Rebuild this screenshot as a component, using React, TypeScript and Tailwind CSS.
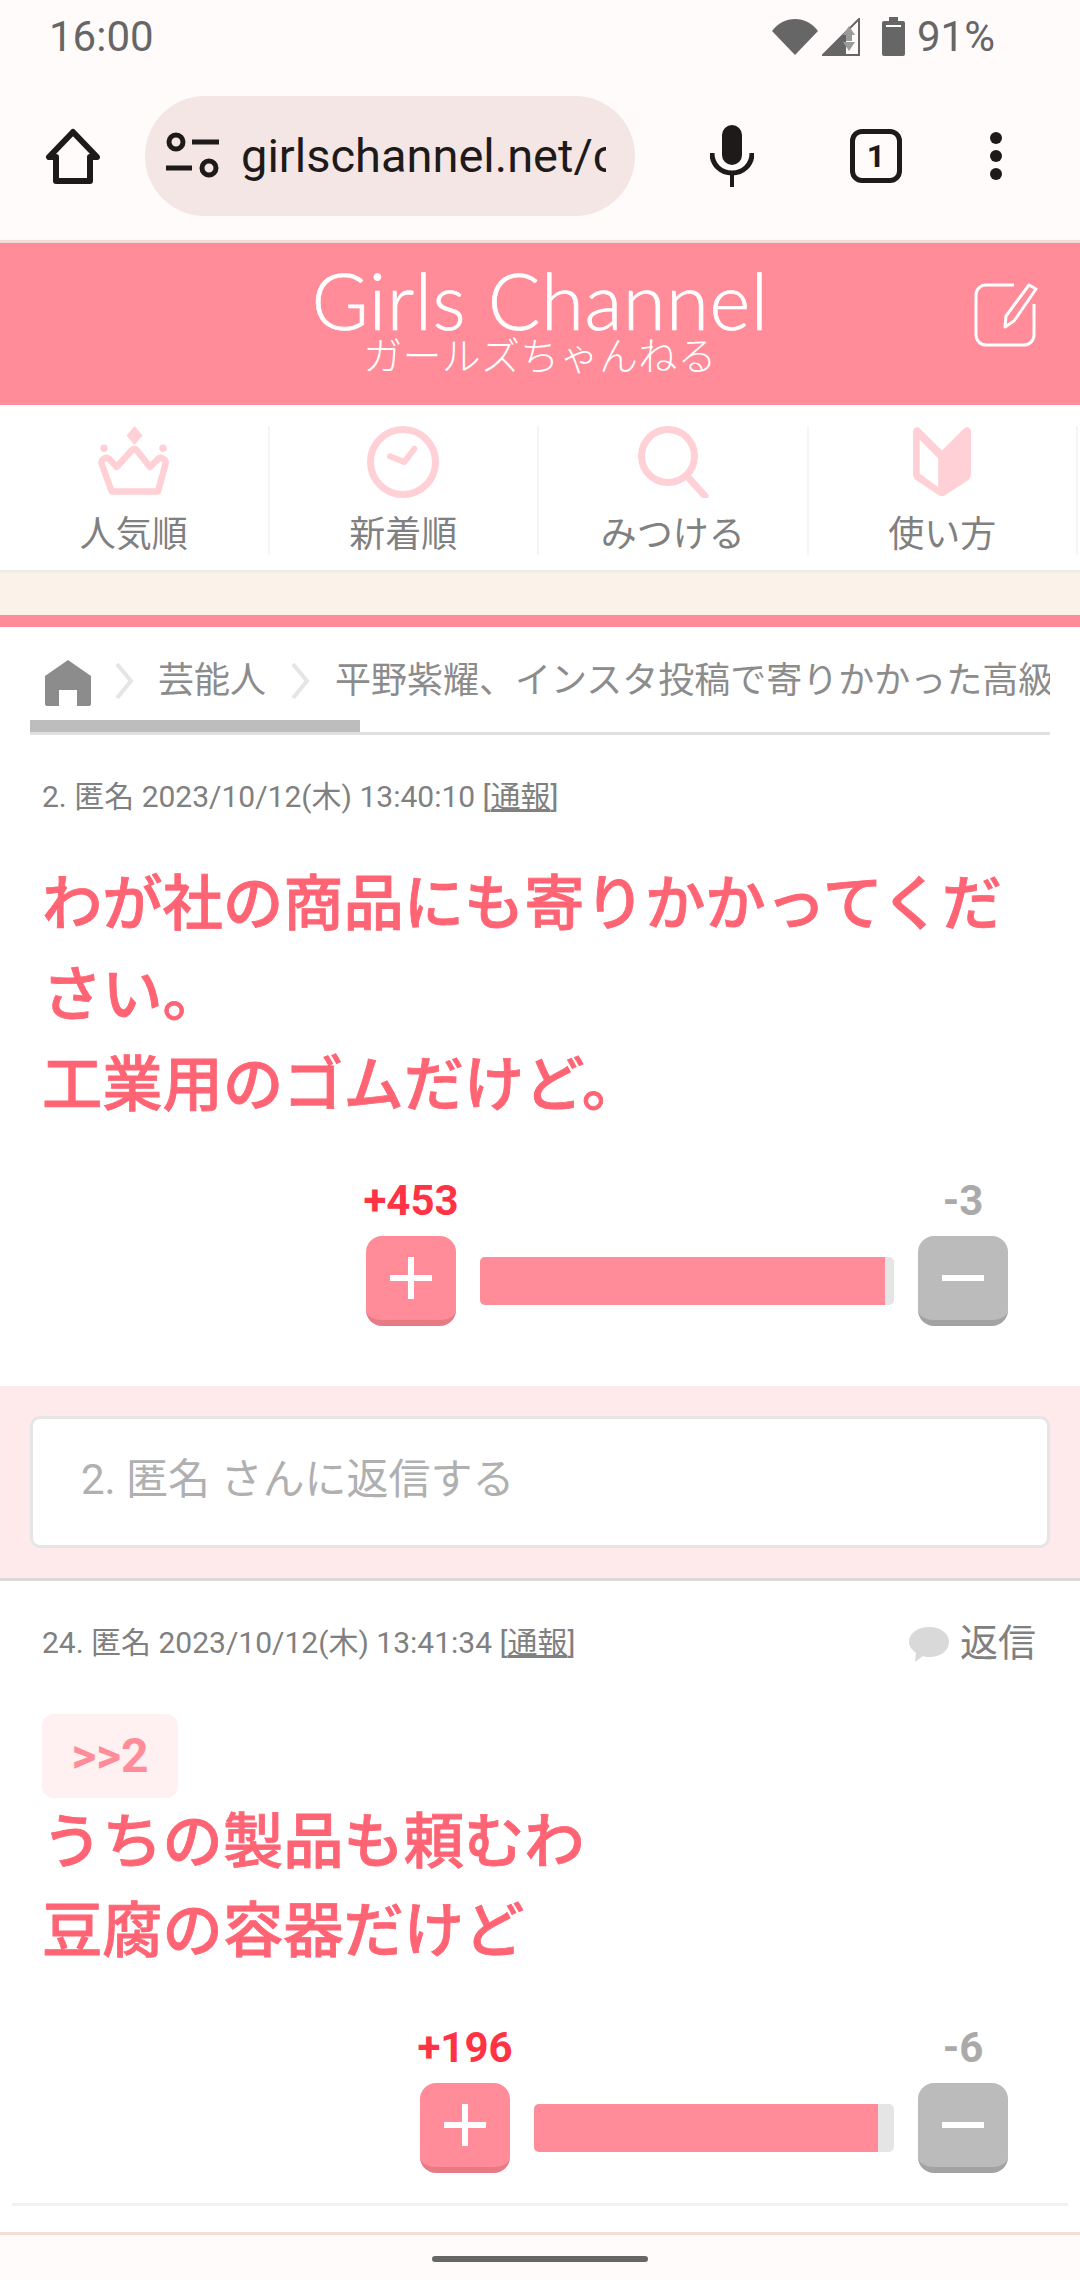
import React from "react";

function StatusBar() {
  return (
    <div className="flex h-[72px] items-center justify-between pl-[49px] pr-[85px] pt-[1px] text-[42px] text-[#666666]">
      <span>16:00</span>
      <div className="flex items-center">
        <svg width="46" height="38" viewBox="0 0 46 38" className="mr-[4px]">
          <path d="M0 13C6 5 14 1 23 1s17 4 23 12L23 37Z" fill="#666666" />
        </svg>
        <svg width="38" height="38" viewBox="0 0 38 38" className="mr-[22px]">
          <path d="M1 37 37 1v36Z" fill="none" stroke="#666666" strokeWidth="2" />
          <path d="M0 38 24 14v24Z" fill="#666666" />
          <path d="M27 8l-6 9h12Z" fill="#9a9a9a" />
          <rect x="24" y="17" width="6" height="6" fill="#9a9a9a" />
          <path d="M21 24h12l-6 9Z" fill="#9a9a9a" />
        </svg>
        <svg width="23" height="39" viewBox="0 0 23 39" className="mr-[12px]">
          <path d="M7 0h9v4h5a2 2 0 0 1 2 2v31a2 2 0 0 1-2 2H2a2 2 0 0 1-2-2V6a2 2 0 0 1 2-2h5Z" fill="#666666" />
          <rect x="4" y="8" width="15" height="2" fill="#fff" />
        </svg>
        <span>91%</span>
      </div>
    </div>
  );
}

function Toolbar() {
  return (
    <div className="flex h-[171px] items-start border-b-[3px] border-[#f3dcd8] pt-[24px]">
      <div className="flex h-[120px] w-[145px] items-center justify-center">
        <svg width="56" height="56" viewBox="0 0 56 56" fill="none" stroke="#1f1a1a" strokeWidth="6" strokeLinejoin="round">
          <path d="M28 4 4 29h7v24h34V29h7Z" />
        </svg>
      </div>
      <div className="flex h-[120px] w-[490px] items-center overflow-hidden rounded-full bg-[#f3e6e5] pl-[21px] pr-[29px]">
        <svg width="54" height="48" viewBox="0 0 54 48" fill="none" stroke="#1f1a1a" strokeWidth="5" className="shrink-0">
          <circle cx="10" cy="10" r="7" />
          <path d="M26 10h27M0 36h26" />
          <circle cx="43" cy="36" r="7" />
        </svg>
        <span className="ml-[21px] overflow-hidden whitespace-nowrap text-[47px] text-[#1f1a1a]">girlschannel.net/comment</span>
      </div>
      <div className="flex h-[120px] w-[194px] items-center justify-center">
        <svg width="44" height="62" viewBox="0 0 44 62" fill="#1f1a1a">
          <rect x="12" y="0" width="20" height="40" rx="10" />
          <path d="M2 28c0 12 9 20 20 20s20-8 20-20" fill="none" stroke="#1f1a1a" strokeWidth="5" />
          <rect x="20" y="46" width="4" height="16" />
        </svg>
      </div>
      <div className="flex h-[120px] w-[94px] items-center justify-center">
        <div className="flex h-[54px] w-[52px] items-center justify-center rounded-[12px] border-[5px] border-[#1f1a1a] text-[32px] font-bold text-[#1f1a1a]">1</div>
      </div>
      <div className="flex h-[120px] w-[146px] flex-col items-center justify-center gap-[6px]">
        <span className="h-[12px] w-[12px] rounded-full bg-[#1f1a1a]" />
        <span className="h-[12px] w-[12px] rounded-full bg-[#1f1a1a]" />
        <span className="h-[12px] w-[12px] rounded-full bg-[#1f1a1a]" />
      </div>
    </div>
  );
}

function SiteHeader() {
  return (
    <div className="relative flex h-[162px] flex-col items-center bg-[#ff8c98] text-white">
      <div className="mt-[22px] h-[70px] font-['Lato'] text-[78px] font-light leading-[70px] tracking-[0.5px] [-webkit-text-stroke:0.7px_#ffffff]">Girls Channel</div>
      <div className="mt-[0px] text-[39px] font-light leading-[44px] tracking-[0.3px]">ガールズちゃんねる</div>
      <svg width="64" height="66" viewBox="0 0 64 66" fill="none" stroke="#fff" strokeWidth="3" className="absolute left-[974px] top-[39px]">
        <path d="M40 3H12A10 10 0 0 0 2 13v40a10 10 0 0 0 10 10h38a10 10 0 0 0 10-10V22" />
        <path d="M55 3l7 4-22 32-9 6 1-11Z" strokeLinejoin="round" />
      </svg>
    </div>
  );
}

const navFill = "#ffd0d6";

function CrownIcon() {
  return (
    <svg width="72" height="72" viewBox="0 0 72 72" fill={navFill}>
      <path d="M36.5 0l8 9.5-8 9.5-8-9.5Z" />
      <circle cx="6" cy="22.3" r="3.7" />
      <circle cx="65" cy="22.3" r="3.7" />
      <path
        d="M13.7 65.5 3.7 38c-1-4 4-8 7.5-5l7.5 8L34 24c1.500-1.500 3-1.500 4.500 0L52 41l8-8c3.500-3 8.500 1 7.500 5l-7.500 27.500Z"
        fill="none"
        stroke={navFill}
        strokeWidth="6.5"
        strokeLinejoin="round"
      />
    </svg>
  );
}

function ClockIcon() {
  return (
    <svg width="72" height="72" viewBox="0 0 72 72" fill="none" stroke={navFill}>
      <circle cx="36" cy="36" r="32.5" strokeWidth="7" />
      <path d="M23 30.300 37.300 36l10-13.300" strokeWidth="6" strokeLinecap="round" strokeLinejoin="round" />
    </svg>
  );
}

function SearchIcon() {
  return (
    <svg width="72" height="72" viewBox="0 0 72 72" fill="none" stroke={navFill}>
      <circle cx="31" cy="30" r="26.5" strokeWidth="7" />
      <path d="M50 50l18 20" strokeWidth="7" strokeLinecap="round" />
    </svg>
  );
}

function BeginnerIcon() {
  return (
    <svg width="58" height="72" viewBox="0 0 60 72" fill={navFill}>
      <path fillRule="evenodd" d="M4 0c2 0 3 1 4 2l22 22L52 2c1-1 2-2 4-2s4 2 4 5v44c0 2-1 3-2 5L34 70c-2 2-6 2-8 0L2 54c-1-2-2-3-2-5V5c0-3 2-5 4-5Zm3 13v35l19 14V32Z" />
    </svg>
  );
}

function NavItem({ label, icon }: { label: string; icon: React.ReactNode }) {
  return (
    <div className="flex w-[269.5px] flex-col items-center pt-[21px]">
      <div className="flex h-[129px] w-full flex-col items-center border-r-[2px] border-[#f5f5f5]">
        <div className="flex h-[72px] items-center">{icon}</div>
        <span className="mt-[15px] text-[36px] leading-[44px] text-[#808080]">{label}</span>
      </div>
    </div>
  );
}

function VoteRow({ plus, minus, barWidth, fillWidth }: { plus: string; minus: string; barWidth: number; fillWidth: number }) {
  return (
    <div className="flex items-end justify-end gap-[24px] pr-[72px]">
      <div className="flex w-[90px] flex-col items-center">
        <span className="mb-[12px] whitespace-nowrap text-[42px] font-bold leading-[46px] text-[#ff3344]">{plus}</span>
        <div className="flex h-[90px] w-[90px] items-center justify-center rounded-[16px] border-b-[6px] border-[#e87a86] bg-[#ff8c98]">
          <svg width="42" height="42" viewBox="0 0 42 42" fill="#fff">
            <rect x="18" y="0" width="6" height="42" />
            <rect x="0" y="18" width="42" height="6" />
          </svg>
        </div>
      </div>
      <div className="mb-[21px] h-[48px] overflow-hidden rounded-[5px] bg-[#e5e5e5]" style={{ width: barWidth }}>
        <div className="h-full bg-[#ff8c98]" style={{ width: fillWidth }} />
      </div>
      <div className="flex w-[90px] flex-col items-center">
        <span className="mb-[12px] text-[42px] font-bold leading-[46px] text-[#aaaaaa]">{minus}</span>
        <div className="flex h-[90px] w-[90px] items-center justify-center rounded-[16px] border-b-[6px] border-[#a3a3a3] bg-[#bbbbbb]">
          <svg width="42" height="6" viewBox="0 0 42 6" fill="#fff">
            <rect width="42" height="6" />
          </svg>
        </div>
      </div>
    </div>
  );
}

function Meta({ text }: { text: string }) {
  return (
    <span className="text-[30px] leading-[40px] text-[#808080]">
      {text} [<span className="underline">通報</span>]
    </span>
  );
}

export default function App() {
  return (
    <div className="flex h-[2280px] w-[1080px] flex-col overflow-hidden bg-[#fffbfa] font-['Roboto','Noto_Sans_CJK_JP',sans-serif]">
      <StatusBar />
      <Toolbar />
      <SiteHeader />
      <div className="flex h-[165px] bg-white">
        <NavItem label="人気順" icon={<CrownIcon />} />
        <NavItem label="新着順" icon={<ClockIcon />} />
        <NavItem label="みつける" icon={<SearchIcon />} />
        <NavItem label="使い方" icon={<BeginnerIcon />} />
      </div>
      <div className="h-[45px] bg-[#fbf2e9] shadow-[inset_0_4px_3px_-2px_#e8e8e8]" />
      <div className="h-[12px] bg-[#ff8c98]" />

      <main className="flex min-h-0 flex-1 flex-col bg-white">
        <div className="mx-[30px] flex h-[93px] items-center overflow-hidden whitespace-nowrap pt-[14px] text-[36px] text-[#8c8c8c]">
          <svg width="46" height="46" viewBox="0 0 46 46" fill="#8c8c8c" className="ml-[15px] mt-[4px] shrink-0">
            <path fillRule="evenodd" d="M23 0 46 16v28a2 2 0 0 1-2 2H32V30H14v16H2a2 2 0 0 1-2-2V16Z" />
          </svg>
          <svg width="20" height="38" viewBox="0 0 20 38" fill="none" stroke="#e5e5e5" strokeWidth="4" className="ml-[23px] shrink-0">
            <path d="M3 2 17 19 3 36" />
          </svg>
          <span className="ml-[24px]">芸能人</span>
          <svg width="20" height="38" viewBox="0 0 20 38" fill="none" stroke="#e5e5e5" strokeWidth="4" className="ml-[24px] shrink-0">
            <path d="M3 2 17 19 3 36" />
          </svg>
          <span className="ml-[25px]">平野紫耀、インスタ投稿で寄りかかった高級車</span>
        </div>
        <div className="mx-[30px] h-[15px] border-b-[3px] border-[#e0e0e0]">
          <div className="h-[12px] w-[330px] bg-[#bdbdbd]" />
        </div>

        <section className="h-[651px]">
          <div className="ml-[42px] mt-[42px]">
            <Meta text="2. 匿名 2023/10/12(木) 13:40:10" />
          </div>
          <p className="ml-[42px] mr-[40px] mt-[43px] text-[60.3px] font-medium leading-[90.5px] text-[#ff6474] [-webkit-text-stroke:0.8px_#ff6474]">
            わが社の商品にも寄りかかってください。
            <br />
            工業用のゴムだけど。
          </p>
          <div className="mt-[46px]">
            <VoteRow plus="+453" minus="-3" barWidth={414} fillWidth={405} />
          </div>
        </section>

        <div className="h-[195px] border-b-[3px] border-[#d9d9d9] bg-[#ffeaeb] px-[30px] pt-[30px]">
          <div className="flex h-[132px] items-center rounded-[10px] border-[3px] border-[#e5e5e5] bg-white pb-[5px] pl-[48px] text-[42px] text-[#b0b0b0]">
            2. 匿名 さんに返信する
          </div>
        </div>

        <section className="flex-1">
          <div className="ml-[42px] mr-[44px] mt-[37px] flex h-[50px] items-center justify-between">
            <Meta text="24. 匿名 2023/10/12(木) 13:41:34" />
            <div className="flex items-center text-[38px] text-[#808080]">
              <svg width="40" height="36" viewBox="0 0 40 36" fill="#d9d9d9" className="mr-[11px] mt-[4px]">
                <path d="M20 0c11 0 20 6 20 15s-9 15-20 15c-2 0-4 0-6-1l-8 6 1-9C3 23 0 19 0 15 0 6 9 0 20 0Z" />
              </svg>
              返信
            </div>
          </div>
          <div className="ml-[42px] mt-[46px] flex h-[84px] w-[136px] items-center justify-center rounded-[12px] bg-[#fff0f1] text-[48px] font-bold text-[#ff8c98]">
            &gt;&gt;2
          </div>
          <p className="ml-[42px] mt-[0px] text-[60.3px] font-medium leading-[89px] text-[#ff6474] [-webkit-text-stroke:0.8px_#ff6474]">
            うちの製品も頼むわ
            <br />
            豆腐の容器だけど
          </p>
          <div className="mt-[49px]">
            <VoteRow plus="+196" minus="-6" barWidth={360} fillWidth={344} />
          </div>
          <div className="mx-[12px] mt-[30px] h-[3px] bg-[#f2f2f2]" />
        </section>
      </main>

      <div className="flex h-[48px] items-start justify-center border-t-[3px] border-[#f5ddd8] pt-[21px]">
        <div className="h-[6px] w-[216px] rounded-full bg-[#666666]" />
      </div>
    </div>
  );
}
